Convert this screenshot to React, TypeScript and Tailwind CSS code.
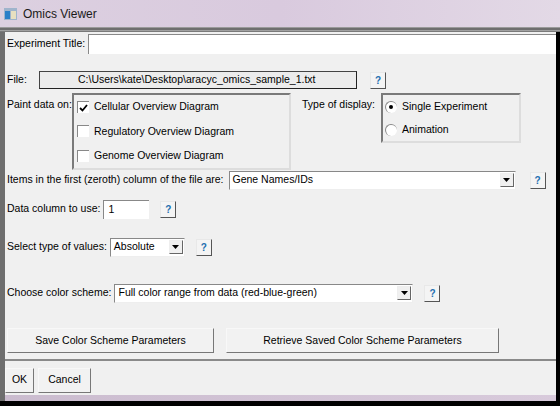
import React from 'react';

const font = { fontFamily: '"Liberation Sans", Arial, sans-serif' };

const Help: React.FC<{ className?: string }> = ({ className = '' }) => (
  <div
    className={`flex items-center justify-center w-[16px] h-[17px] bg-[#f4f4f4] border border-t-[#e8e8e8] border-l-[#e8e8e8] border-r-[#555] border-b-[#555] text-[10px] font-bold text-[#1e6fb0] ${className}`}
  >
    ?
  </div>
);

const Arrow: React.FC = () => (
  <div className="flex items-center justify-center w-[14px] h-[14px] bg-[#f0f0f0] border border-t-[#eee] border-l-[#eee] border-r-[#666] border-b-[#666]">
    <svg width="7" height="4" viewBox="0 0 7 4">
      <path d="M0 0h7L3.5 4z" fill="#000" />
    </svg>
  </div>
);

const Select: React.FC<{ value: string; width: string }> = ({ value, width }) => (
  <div
    className={`flex items-center justify-between h-[19px] bg-white border border-t-[#888] border-l-[#888] border-r-[#eee] border-b-[#eee] pl-[3px] pr-[1px] ${width}`}
  >
    <span className="whitespace-nowrap">{value}</span>
    <Arrow />
  </div>
);

const Check: React.FC<{ checked?: boolean; label: string }> = ({ checked, label }) => (
  <div className="flex items-center h-[26px] gap-[5px]">
    <div className="flex items-center justify-center w-[12px] h-[12px] bg-white border-t border-l border-[#888]">
      {checked && (
        <svg width="9" height="8" viewBox="0 0 9 8">
          <path d="M1 4l2.5 2.5L8 1" stroke="#000" strokeWidth="1.8" fill="none" />
        </svg>
      )}
    </div>
    <span className="whitespace-nowrap">{label}</span>
  </div>
);

const Radio: React.FC<{ checked?: boolean; label: string }> = ({ checked, label }) => (
  <div className="flex items-center h-[26px] gap-[5px]">
    <div className="flex items-center justify-center w-[12px] h-[12px] rounded-full bg-white border-t border-l border-[#888]">
      {checked && <div className="w-[4px] h-[4px] rounded-full bg-black" />}
    </div>
    <span className="whitespace-nowrap">{label}</span>
  </div>
);

const Button: React.FC<{ label: string; width: string }> = ({ label, width }) => (
  <div
    className={`flex items-center justify-center h-[25px] bg-[#f2f2f2] border border-t-[#f8f8f8] border-l-[#f8f8f8] border-r-[#777] border-b-[#777] whitespace-nowrap ${width}`}
  >
    {label}
  </div>
);

export default function App() {
  return (
    <div className="w-[560px] h-[406px] overflow-hidden flex flex-col bg-black text-[10.5px] text-black" style={font}>
      {/* title bar */}
      <div className="h-[27px] flex items-center gap-[6px] px-[4px] bg-gradient-to-r from-[#dcd0e0] via-[#d9cade] to-[#e3d9e6]">
        <svg width="13" height="12" viewBox="0 0 13 12">
          <rect x="0" y="0" width="13" height="12" fill="#9fb4cc" />
          <rect x="1" y="3" width="5" height="8" fill="#2a7fc8" />
          <rect x="7" y="3" width="5" height="8" fill="#e8e0c0" />
        </svg>
        <span className="text-[12px] text-[#1a1a1a]">Omics Viewer</span>
      </div>
      {/* frame top */}
      <div className="h-[5px] flex flex-col">
        <div className="h-[1px] bg-[#9a9a9a]" />
        <div className="h-[2px] bg-[#6e6e6e]" />
        <div className="h-[1px] bg-[#a0a0a0]" />
        <div className="h-[1px] bg-[#7a7a7a]" />
      </div>
      <div className="flex-1 flex">
        <div className="w-[5px] bg-[#6e6e6e]" />
        <div className="flex-1 flex flex-col bg-[#f0f0f0]">
          {/* main panel */}
          <div className="flex flex-col pl-[2px] pb-[6px] border-b-2 border-[#8a8a8a]">
            <div className="flex items-center gap-[3px] h-[21px] mt-[1px]">
              <span className="whitespace-nowrap">Experiment Title:</span>
              <div className="flex-1 h-[20px] bg-white border-t border-l border-[#888]" />
            </div>

            <div className="flex items-center h-[20px] mt-[16px]">
              <span className="w-[32px]">File:</span>
              <div className="w-[318px] h-[18px] flex items-center pl-[38px] bg-[#ececec] border border-[#444] border-b-[#222] border-r-[#222] whitespace-nowrap">
                C:\Users\kate\Desktop\aracyc_omics_sample_1.txt
              </div>
              <Help className="ml-[13px]" />
            </div>

            <div className="flex mt-[3px]">
              <span className="w-[65px] mt-[4px] whitespace-nowrap">Paint data on:</span>
              <div className="w-[219px] h-[77px] pl-[3px] border-2 border-t-[#7a7a7a] border-l-[#7a7a7a] border-r-[#ddd] border-b-[#ddd] flex flex-col">
                <Check checked label="Cellular Overview Diagram" />
                <Check label="Regulatory Overview Diagram" />
                <Check label="Genome Overview Diagram" />
              </div>
              <span className="ml-[11px] mr-[6px] mt-[4px] whitespace-nowrap">Type of display:</span>
              <div className="w-[140px] h-[50px] pl-[2px] border-2 border-t-[#7a7a7a] border-l-[#7a7a7a] border-r-[#ddd] border-b-[#ddd] flex flex-col">
                <Radio checked label="Single Experiment" />
                <Radio label="Animation" />
              </div>
            </div>

            <div className="flex items-center mt-[0px] h-[20px]">
              <span className="mr-[5px] whitespace-nowrap">Items in the first (zeroth) column of the file are:</span>
              <Select value="Gene Names/IDs" width="w-[287px]" />
              <Help className="ml-[14px]" />
            </div>

            <div className="flex items-center mt-[9px] h-[20px]">
              <span className="mr-[3px] whitespace-nowrap">Data column to use:</span>
              <div className="w-[46px] h-[19px] flex items-center pl-[4px] bg-white border-t border-l border-[#888]">1</div>
              <Help className="ml-[11px]" />
            </div>

            <div className="flex items-center mt-[18px] h-[20px]">
              <span className="mr-[3px] whitespace-nowrap">Select type of values:</span>
              <Select value="Absolute" width="w-[75px]" />
              <Help className="ml-[11px]" />
            </div>

            <div className="flex items-center mt-[26px] h-[20px]">
              <span className="mr-[3px] whitespace-nowrap">Choose color scheme:</span>
              <Select value="Full color range from data (red-blue-green)" width="w-[299px]" />
              <Help className="ml-[11px]" />
            </div>

            <div className="flex items-center gap-[12px] mt-[25px]">
              <Button label="Save Color Scheme Parameters" width="w-[207px]" />
              <Button label="Retrieve Saved Color Scheme Parameters" width="w-[273px]" />
            </div>
          </div>

          {/* bottom buttons */}
          <div className="flex items-center gap-[4px] pt-[4px] h-[34px]">
            <Button label="OK" width="w-[29px]" />
            <Button label="Cancel" width="w-[53px]" />
          </div>
          <div className="flex-1 bg-gradient-to-r from-[#cbbccf] to-[#d8cadb]" />
        </div>
        <div className="w-[4px] bg-black" />
      </div>
      <div className="h-[5px] bg-black" />
    </div>
  );
}
